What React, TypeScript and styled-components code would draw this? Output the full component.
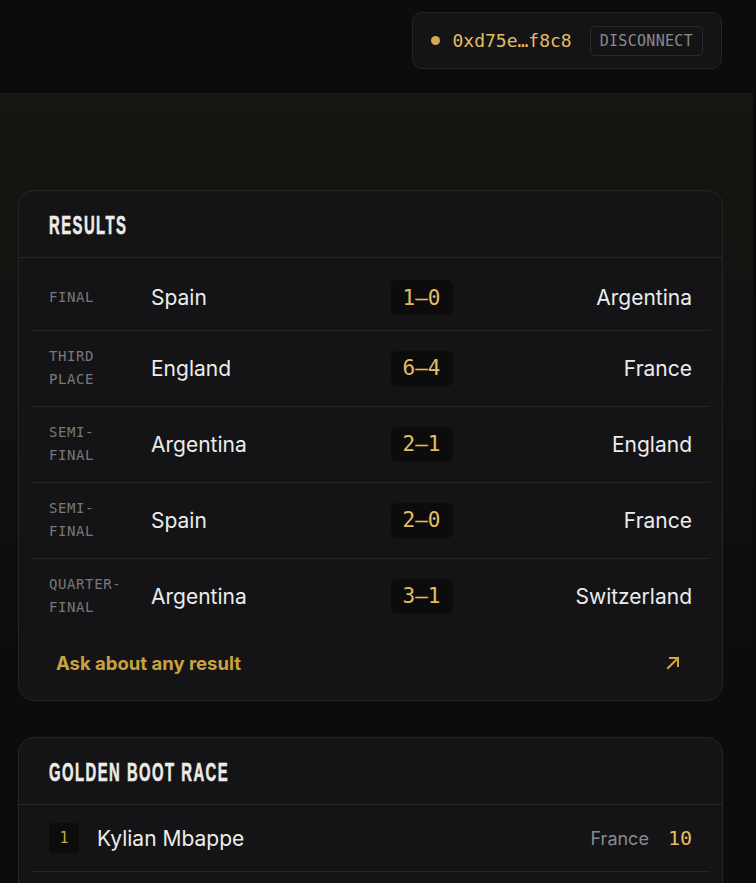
import styled, { createGlobalStyle } from 'styled-components'

const colors = {
  page: '#0c0c0d',
  card: '#141416',
  border: '#252528',
  rule: '#262629',
  gold: '#e3bd62',
  goldDeep: '#c9a240',
  text: '#ececec',
  muted: '#78787c',
  dim: '#8a8a8e',
}

const mono = `"DejaVu Sans Mono", "Liberation Mono", monospace`
const sans = `Inter, "Noto Sans", sans-serif`
const display = `"Liberation Sans", Arial, sans-serif`

const GlobalStyle = createGlobalStyle`
  html, body {
    margin: 0;
    padding: 0;
    background: #0b0b0c;
    color: ${colors.text};
    font-family: ${sans};
  }
  * { box-sizing: border-box; }
`

const Page = styled.div`
  width: 753px;
  min-height: 883px;
  background: ${colors.page};
`

const TopBar = styled.header`
  height: 94px;
  display: flex;
  justify-content: flex-end;
  align-items: flex-start;
  padding: 12px 31px 0 18px;
  border-bottom: 1px solid #1c1c1d;
`

const Wallet = styled.div`
  display: flex;
  align-items: center;
  height: 57px;
  padding: 0 18px 0 18px;
  background: ${colors.card};
  border: 1px solid ${colors.border};
  border-radius: 10px;
`

const Dot = styled.span`
  width: 9px;
  height: 9px;
  border-radius: 50%;
  background: #d2a94e;
  margin-right: 12px;
`

const Address = styled.span`
  font-family: ${mono};
  font-size: 18px;
  color: ${colors.gold};
  margin-right: 18px;
`

const GhostButton = styled.button`
  height: 30px;
  padding: 0 9px;
  background: transparent;
  border: 1px solid #2a2a2d;
  border-radius: 5px;
  font-family: ${mono};
  font-size: 15px;
  letter-spacing: 0.3px;
  color: ${colors.dim};
`

/* warm glow under the top bar that fades into the page */
const Body = styled.div`
  padding: 96px 30px 0 18px;
  background: linear-gradient(180deg, #17150f 0px, #141310 150px, #111111 320px, ${colors.page} 560px);
`

const Stack = styled.main`
  display: flex;
  flex-direction: column;
  gap: 36px;
`

const Card = styled.section`
  background: ${colors.card};
  border: 1px solid ${colors.border};
  border-radius: 16px;
  overflow: hidden;
`

const CardHeader = styled.div`
  height: 67px;
  display: flex;
  align-items: center;
  padding: 2px 30px 0;
  border-bottom: 1px solid ${colors.rule};
`

const CardTitle = styled.h2`
  display: inline-block;
  margin: 0;
  font-family: ${display};
  font-weight: 700;
  font-size: 26px;
  letter-spacing: 2.6px;
  color: #ecebe6;
  -webkit-text-stroke: 0.6px #ecebe6;
  text-transform: uppercase;
  transform: scaleX(0.57);
  transform-origin: left center;
  white-space: nowrap;
`

const List = styled.div<{ $padTop?: number; $padBottom?: number }>`
  padding: ${({ $padTop = 0 }) => $padTop}px 12px ${({ $padBottom = 0 }) => $padBottom}px;
`

const MatchRow = styled.div`
  display: grid;
  grid-template-columns: 90px 1fr auto 1fr;
  gap: 12px;
  align-items: center;
  padding: 14px 18px 15px;
  border-bottom: 1px solid ${colors.rule};

  &:last-child {
    border-bottom: none;
  }
`

const Stage = styled.span`
  font-family: ${mono};
  font-size: 14px;
  line-height: 23px;
  color: ${colors.muted};
  text-transform: uppercase;
  letter-spacing: 0.6px;
`

const Team = styled.span<{ $align: 'left' | 'right' }>`
  font-size: 21px;
  color: ${colors.text};
  text-align: ${({ $align }) => $align};
`

const Score = styled.span`
  width: 62px;
  height: 35px;
  display: flex;
  align-items: center;
  justify-content: center;
  background: ${colors.page};
  border-radius: 6px;
  font-family: ${mono};
  font-size: 21px;
  color: ${colors.gold};
`

const CardFooter = styled.a`
  display: flex;
  align-items: center;
  justify-content: space-between;
  height: 66px;
  padding: 0 42px 8px 37px;
  font-size: 18.5px;
  font-weight: 700;
  color: ${colors.goldDeep};
  text-decoration: none;
`

const ScorerRow = styled.div`
  display: flex;
  align-items: center;
  height: 67px;
  padding: 0 18px;
  border-bottom: 1px solid ${colors.rule};
`

const Rank = styled.span`
  width: 30px;
  height: 30px;
  display: flex;
  align-items: center;
  justify-content: center;
  background: ${colors.page};
  border-radius: 4px;
  font-family: ${mono};
  font-size: 15px;
  color: ${colors.goldDeep};
  margin-right: 18px;
`

const PlayerName = styled.span`
  flex: 1;
  font-size: 21px;
  color: ${colors.text};
`

const Nation = styled.span`
  font-size: 18px;
  color: ${colors.dim};
  margin-right: 19px;
`

const Goals = styled.span`
  font-family: ${mono};
  font-size: 20px;
  color: ${colors.gold};
`

const results = [
  { stage: ['Final'], home: 'Spain', score: '1–0', away: 'Argentina' },
  { stage: ['Third', 'place'], home: 'England', score: '6–4', away: 'France' },
  { stage: ['Semi-', 'final'], home: 'Argentina', score: '2–1', away: 'England' },
  { stage: ['Semi-', 'final'], home: 'Spain', score: '2–0', away: 'France' },
  { stage: ['Quarter-', 'final'], home: 'Argentina', score: '3–1', away: 'Switzerland' },
]

const scorers = [{ rank: 1, name: 'Kylian Mbappe', nation: 'France', goals: 10 }]

const ArrowUpRight = () => (
  <svg width="14" height="14" viewBox="0 0 14 14" fill="none">
    <path d="M2 12L12 2M4 2h8v8" stroke="#d4a640" strokeWidth="2" strokeLinecap="square" />
  </svg>
)

export default function App() {
  return (
    <>
      <GlobalStyle />
      <Page>
        <TopBar>
          <Wallet>
            <Dot />
            <Address>0xd75e…f8c8</Address>
            <GhostButton>DISCONNECT</GhostButton>
          </Wallet>
        </TopBar>
        <Body>
          <Stack>
            <Card>
              <CardHeader>
                <CardTitle>Results</CardTitle>
              </CardHeader>
              <List $padTop={8}>
                {results.map((m, i) => (
                  <MatchRow key={i}>
                    <Stage>
                      {m.stage.map((s, j) => (
                        <div key={j}>{s}</div>
                      ))}
                    </Stage>
                    <Team $align="left">{m.home}</Team>
                    <Score>{m.score}</Score>
                    <Team $align="right">{m.away}</Team>
                  </MatchRow>
                ))}
              </List>
              <CardFooter href="#">
                Ask about any result
                <ArrowUpRight />
              </CardFooter>
            </Card>
            <Card>
              <CardHeader>
                <CardTitle>Golden Boot Race</CardTitle>
              </CardHeader>
              <List $padBottom={48}>
                {scorers.map((p) => (
                  <ScorerRow key={p.rank}>
                    <Rank>{p.rank}</Rank>
                    <PlayerName>{p.name}</PlayerName>
                    <Nation>{p.nation}</Nation>
                    <Goals>{p.goals}</Goals>
                  </ScorerRow>
                ))}
              </List>
            </Card>
          </Stack>
        </Body>
      </Page>
    </>
  )
}
